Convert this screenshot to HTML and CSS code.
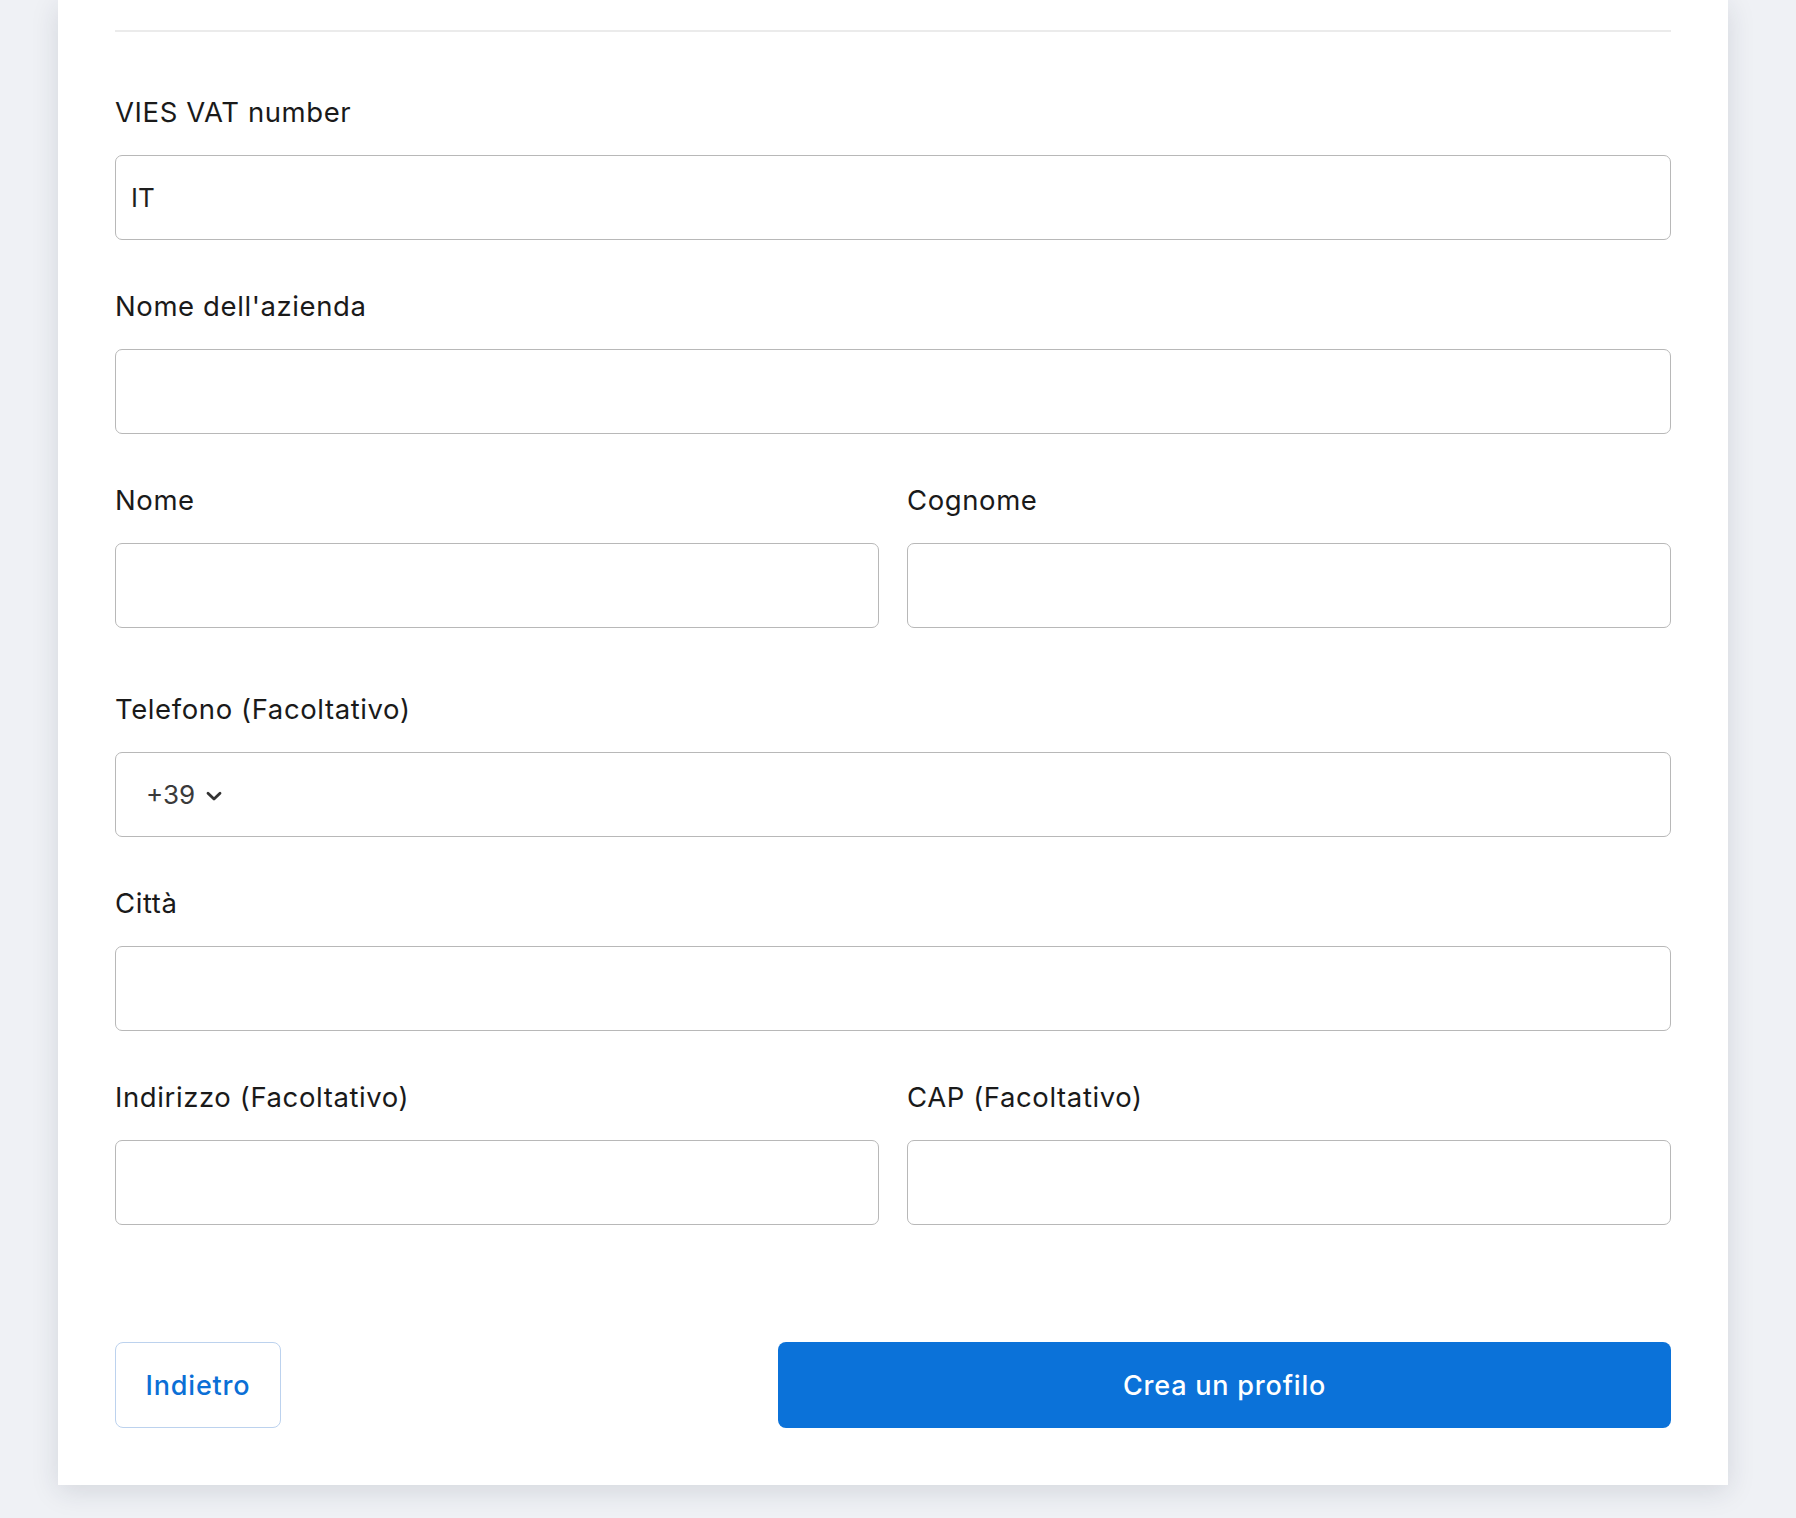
FILE: index.html
```html
<!DOCTYPE html>
<html lang="it">
<head>
<meta charset="utf-8">
<title>Crea un profilo</title>
<link rel="stylesheet" href="styles.css">
</head>
<body>
<main class="card">
  <hr class="divider">
  <form class="form">
    <div class="field">
      <label class="label">VIES VAT number</label>
      <div class="input"><span class="value">IT</span></div>
    </div>
    <div class="field">
      <label class="label">Nome dell'azienda</label>
      <div class="input"></div>
    </div>
    <div class="row">
      <div class="field">
        <label class="label">Nome</label>
        <div class="input"></div>
      </div>
      <div class="field">
        <label class="label">Cognome</label>
        <div class="input"></div>
      </div>
    </div>
    <div class="field phone">
      <label class="label">Telefono (Facoltativo)</label>
      <div class="input">
        <span class="country">+39
          <svg class="chev" width="16" height="10" viewBox="0 0 16 10"><path d="M2 2.2 L8 8 L14 2.2" fill="none" stroke="#333" stroke-width="2.8" stroke-linecap="round" stroke-linejoin="round"/></svg>
        </span>
      </div>
    </div>
    <div class="field">
      <label class="label">Città</label>
      <div class="input"></div>
    </div>
    <div class="row">
      <div class="field">
        <label class="label">Indirizzo (Facoltativo)</label>
        <div class="input"></div>
      </div>
      <div class="field">
        <label class="label">CAP (Facoltativo)</label>
        <div class="input"></div>
      </div>
    </div>
    <div class="actions">
      <button type="button" class="btn btn-back">Indietro</button>
      <button type="button" class="btn btn-primary">Crea un profilo</button>
    </div>
  </form>
</main>
</body>
</html>
```

FILE: styles.css
```css
* { box-sizing: border-box; }
html, body { margin: 0; padding: 0; }
body {
  background: #eff1f5;
  font-family: Inter, "Noto Sans", sans-serif;
  color: #1a1a1a;
  height: 1518px;
  overflow: hidden;
}
.card {
  margin-left: 58px;
  width: 1670px;
  background: #fff;
  padding: 30px 57px 57px;
  box-shadow: 0 6px 26px rgba(30, 40, 60, 0.13);
}
.divider {
  margin: 0;
  border: 0;
  height: 2px;
  background: #ebebeb;
}
.form {
  display: flex;
  flex-direction: column;
  gap: 50px;
  padding-top: 64px;
}
.row {
  display: grid;
  grid-template-columns: 1fr 1fr;
  gap: 28px;
}
.field {
  display: flex;
  flex-direction: column;
}
.phone { margin-top: 15px; }
.label {
  font-size: 27.5px;
  line-height: 32px;
  letter-spacing: 0.6px;
  margin-bottom: 27px;
  color: #1a1a1a;
}
.input {
  height: 85px;
  border: 1px solid #b8b8b8;
  border-radius: 7px;
  display: flex;
  align-items: center;
  padding: 0 15px;
  font-size: 26px;
  color: #1e1e1e;
}
.country {
  display: flex;
  align-items: center;
  gap: 11px;
  padding-left: 15px;
  color: #3a3a3a;
  font-size: 26px;
}
.chev { margin-top: 2px; }
.actions {
  display: flex;
  justify-content: space-between;
  margin-top: 67px;
}
.btn {
  height: 86px;
  border-radius: 8px;
  font-family: Inter, "Noto Sans", sans-serif;
  font-size: 27px;
  letter-spacing: 0.8px;
  font-weight: 500;
  cursor: pointer;
}
.btn-back {
  width: 166px;
  background: #fff;
  border: 1px solid #bcd2ee;
  color: #0b6fd6;
}
.btn-primary {
  width: 893px;
  background: #0b72d9;
  border: 0;
  color: #fff;
}
```
